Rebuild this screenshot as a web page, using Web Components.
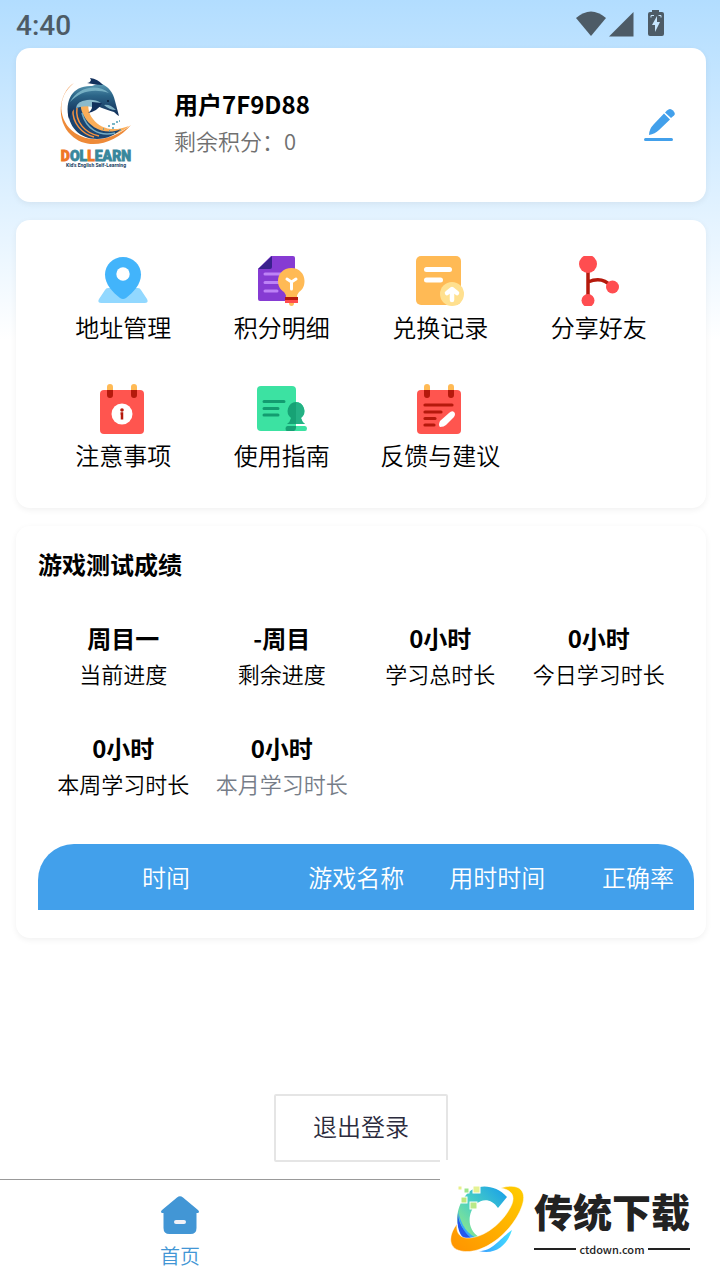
<!DOCTYPE html>
<html lang="zh-CN">
<head>
<meta charset="utf-8">
<meta name="viewport" content="width=device-width, initial-scale=1">
<title>个人中心</title>
<style>
  html {
    --primary: #42a0eb;
    --tab-active: #4296d5;
    --muted: #707070;
  }
  body {
    margin: 0;
    font-family: "Noto Sans CJK SC", sans-serif;
    font-size: 24px;
    font-weight: 350;
    line-height: 32px;
    color: #000;
  }
</style>
</head>
<body>
<profile-page></profile-page>

<script>
// Attach a shadow root filled from a template string
function render(el, html) {
  const template = document.createElement('template');
  template.innerHTML = html;
  el.attachShadow({ mode: 'open' });
  el.shadowRoot.appendChild(template.content.cloneNode(true));
}

const icons = {
  address: `
    <path d="M10 32h30q2 0 3 2l6 9q2 4-2 4H3q-4 0-2-4l6-9q1-2 3-2z" fill="#92d8ff"/>
    <path d="M25 1C15 1 7 9 7 18.500c0 10 8 18 15 23.500q3 2 6 0c7-5.500 15-13.500 15-23.500C43 9 35 1 25 1z" fill="#42b4fb"/>
    <circle cx="25" cy="18" r="6.700" fill="#fff"/>`,
  points: `
    <path d="M14 0h22q2 0 2 2v43H3q-2 0-2-2V13z" fill="#863bd3"/>
    <path d="M15 0v11q0 2-2 2H1z" fill="#39218d"/>
    <path d="M8 18h16M8 26.500h14M8 35h12" stroke="#bd82f6" stroke-width="3" stroke-linecap="round"/>
    <path d="M34.500 12C26 12 21 18 21 25c0 6 3 9 6 11q2 2 2 6h11q0-4 2-6c3-2 5.500-5 5.500-11 0-7-5-13-13-13z" fill="#ffba55"/>
    <path d="M30 23l4.500 3 4.500-3M34.500 26v7" fill="none" stroke="#fff" stroke-width="3" stroke-linecap="round"/>
    <path d="M28 41h13v3H28z" fill="#b5190c"/><path d="M28 44h13v3H28z" fill="#ff4d4d"/>
    <path d="M32 47h5q0 3-2.500 3T32 47z" fill="#ffba55"/>`,
  exchange: `
    <rect x="1" y="0" width="45" height="49" rx="5" fill="#ffba55"/>
    <path d="M11.500 13.500h23M11.500 24h14" stroke="#fff" stroke-width="5" stroke-linecap="round"/>
    <circle cx="37" cy="38" r="12" fill="#ffe08f"/>
    <path d="M37 34v10M32 37l5-4 5 4" fill="none" stroke="#fff" stroke-width="4.500" stroke-linecap="round" stroke-linejoin="round"/>`,
  share: `
    <path d="M14 10v34M14 26q14-6 23 4" fill="none" stroke="#b5190c" stroke-width="3.500"/>
    <circle cx="14" cy="8" r="9" fill="#ff4d50"/>
    <circle cx="14" cy="44.500" r="6.500" fill="#ff4d50"/>
    <circle cx="38.500" cy="31" r="6.500" fill="#ff4d50"/>`,
  notice: `
    <rect x="2" y="6" width="44" height="44" rx="4" fill="#ff554f"/>
    <path d="M9 6V3a3 3 0 0 1 6 0v3zM33 6V3a3 3 0 0 1 6 0v3z" fill="#ffba55"/>
    <path d="M9 6h6v5a3 3 0 0 1-6 0zM33 6h6v5a3 3 0 0 1-6 0z" fill="#b5190c"/>
    <circle cx="24" cy="30" r="10.500" fill="#fff"/>
    <circle cx="24" cy="26" r="1.800" fill="#b5190c"/>
    <path d="M22.500 29.500H24v6" fill="none" stroke="#b5190c" stroke-width="2.500"/>`,
  guide: `
    <rect x="0" y="2" width="39" height="45" rx="4" fill="#3ce2a2"/>
    <path d="M7 17.500h20M7 24.500h14M7 31h14" stroke="#139c70" stroke-width="3" stroke-linecap="round"/>
    <path d="M39 18a9 9 0 0 0-5 16q-1 4-4 6h18q-3-2-4-6a9 9 0 0 0-5-16zM30.500 42h17.500q2 0 2 2.500T48 47H30q-2 0-2-2.500t2.500-2.500z" fill="#3ce2a2"/>
    <path d="M39 18a9 9 0 0 0-5 16q-1 4-4 6h9zM39 42h-8.500q-2 0-2 2.500T30 47h7q2-1 2-3z" fill="#17a275"/>
    <path d="M39 18v22h9q-3-2-4-6a9 9 0 0 0-5-16z" fill="#24b184"/>`,
  feedback: `
    <rect x="2" y="6" width="44" height="44" rx="4" fill="#ff554f"/>
    <path d="M9 6V3a3 3 0 0 1 6 0v3zM33 6V3a3 3 0 0 1 6 0v3z" fill="#ffba55"/>
    <path d="M9 6h6v5a3 3 0 0 1-6 0zM33 6h6v5a3 3 0 0 1-6 0z" fill="#b5190c"/>
    <path d="M10 21h27M10 28h16M10 34.500h10M10 41h9" stroke="#b5190c" stroke-width="3.200" stroke-linecap="round"/>
    <path d="M25 37l9-8q3-3 5-1t0 5l-8 8q-2 2-6 2-2-2 0-6z" fill="#fff"/>`
};

class StatusBar extends HTMLElement {
  constructor() {
    super();
    render(this, `
      <style>
        :host {
          box-sizing: border-box;
          display: flex;
          align-items: center;
          justify-content: space-between;
          height: 48px;
          padding: 4px 56px 0 16px;
          color: #4d5b66;
          font: 500 28px/44px Roboto, sans-serif;
        }
        svg { display: block; }
      </style>
      <time><slot></slot></time>
      <svg width="92" height="32" viewBox="0 2 92 32" fill="currentColor" aria-hidden="true">
        <path d="M4 10Q19-3 34 10L19 28z"/>
        <path d="M37 28.500L61.500 4v24.500z"/>
        <path d="M80 2h7v2h3q2 0 2 2v20q0 2-2 2H78q-2 0-2-2V6q0-2 2-2h2z"/>
        <path d="M85 8l-5 9h3v7l5-10h-3z" fill="#c6e5fd"/>
        <path d="M79 9.500v-2h3M86.500 7.500H89v2" stroke="#c6e5fd" fill="none"/>
      </svg>
    `);
  }
}

class PageCard extends HTMLElement {
  constructor() {
    super();
    render(this, `
      <style>
        :host {
          display: block;
          background: #fff;
          border-radius: 14px;
          box-shadow: 0 2px 6px rgba(0, 0, 0, 0.06);
        }
      </style>
      <slot></slot>
    `);
  }
}

class BrandLogo extends HTMLElement {
  constructor() {
    super();
    render(this, `
      <style>
        :host { display: block; }
        svg { display: block; }
        .name { font: 900 14px Roboto, sans-serif; stroke-width: 0.8px; }
        .sub { font: bold 5px Roboto, sans-serif; }
      </style>
      <svg width="100" height="100" viewBox="0 0 100 100">
        <defs>
          <linearGradient id="body" x1="0" y1="0" x2="0" y2="1">
            <stop offset="0" stop-color="#5d9db6"/>
            <stop offset=".35" stop-color="#2b6588"/>
            <stop offset="1" stop-color="#0d2450"/>
          </linearGradient>
        </defs>
        <path d="M28 8C10 22 12 46 29 58c18 12 40 5 56-8C70 68 42 77 25 60 10 46 12 18 28 8z" fill="#ee8a38"/>
        <path d="M31 31c-2 16 8 29 26 30 10 0 19-4 26-10-15 6-29 3-36-7-5-6-6-14-3-20z" fill="#fbae59"/>
        <path d="M22 32c-1 20 12 32 29 32 9 0 19-4 24-10-15 7-31-1-37-13-2-4-4-8-3-14z" fill="#1b4571"/>
        <path d="M31 33c-2 14 8 25 22 28M27 34c-1 14 9 25 21 28" fill="none" stroke="#f5913f" stroke-width="1.500"/>
        <path d="M36 38c4 15 16 24 33 20" fill="none" stroke="#75acc2" stroke-width="1.500"/>
        <path d="M23 44C18 25 27 10 46 11l8-3c9 4 13 9 15 18l4 15q-2-1-5-4c-5-1-8-3-12-4-9-4-16-3-22-2-5 1-8 4-11 13z" fill="url(#body)"/>
        <path d="M41 8q3 0 4-3l-1-2q8 1 13 7-7 0-16-2z" fill="#12305c"/>
        <path d="M24 27c8-15 27-19 39-9-15-5-29-2-39 9z" fill="#75afc3"/>
        <path d="M41 25q-10 1-11 8 9-3 16-1 3-3 9-4-6-4-14-3z" fill="#8bbacc"/>
        <path d="M46 27l10 1q-4 8-14 10 4-3 4-6z" fill="#12305c"/>
        <path d="M58 30q6-1 12 5-7 0-12-5z" fill="#7fb2c6"/>
        <circle cx="62" cy="26" r="1" fill="#081b38"/>
        <path d="M57 54h1M62 51h2M66 49h3M70 47h2M66 53h2M73 46h1M63 56h1M74 55h1" stroke="#4e9fb5" stroke-width="1.500"/>
        <text class="name" x="50" y="86" text-anchor="middle" fill="#38879c" stroke="#38879c"><tspan fill="#ef7623" stroke="#ef7623">D</tspan>OL<tspan fill="#ef7623" stroke="#ef7623">L</tspan>EARN</text>
        <text class="sub" x="50" y="92" text-anchor="middle" fill="#153b5f">Kid's English Self-Learning</text>
      </svg>
    `);
  }
}

class UserPanel extends HTMLElement {
  constructor() {
    super();
    render(this, `
      <style>
        :host {
          display: flex;
          align-items: center;
          gap: 28px;
          padding: 27px 30px;
        }
        .info {
          flex: 1;
          padding-bottom: 6px;
        }
        h1 {
          margin: 0;
          font-size: 24px;
          font-weight: 700;
          line-height: 36px;
        }
        p {
          margin: 0;
          color: var(--muted);
          font-size: 22px;
          line-height: 36px;
        }
        button {
          padding: 0;
          border: 0;
          background: none;
          color: var(--primary);
          cursor: pointer;
        }
        svg { display: block; }
      </style>
      <brand-logo></brand-logo>
      <div class="info">
        <h1><slot name="name"></slot></h1>
        <p><slot name="points"></slot></p>
      </div>
      <button type="button" aria-label="编辑资料">
        <svg width="32" height="32" viewBox="0 0 32 32" fill="currentColor">
          <path d="M5 26Q5 20 10 15L20 4.500l6 6L15 21q-4 4-10 5z"/>
          <path d="M21 3.500l2-2q3-3 6 0t1 5L27 9z"/>
          <rect x="0" y="29" width="29" height="3" rx="1.500"/>
        </svg>
      </button>
    `);
  }
}

class MenuGrid extends HTMLElement {
  constructor() {
    super();
    render(this, `
      <style>
        :host {
          display: grid;
          grid-template-columns: repeat(4, 1fr);
          row-gap: 40px;
          padding: 36px 28px;
        }
      </style>
      <slot></slot>
    `);
  }
}

class MenuItem extends HTMLElement {
  constructor() {
    super();
    render(this, `
      <style>
        :host { display: block; }
        a {
          display: flex;
          flex-direction: column;
          align-items: center;
          gap: 4px;
          color: inherit;
          line-height: 34px;
          text-decoration: none;
          white-space: nowrap;
        }
        svg { display: block; }
      </style>
      <a href="#${this.getAttribute('icon')}">
        <svg width="50" height="50" viewBox="0 0 50 50" aria-hidden="true">${icons[this.getAttribute('icon')]}</svg>
        <span><slot></slot></span>
      </a>
    `);
  }
}

class ScorePanel extends HTMLElement {
  constructor() {
    super();
    render(this, `
      <style>
        :host {
          display: block;
          padding: 22px 12px 28px 22px;
        }
        h2 {
          margin: 0;
          font-size: 24px;
          font-weight: 700;
          line-height: 32px;
        }
        .stats {
          display: grid;
          grid-template-columns: repeat(4, 1fr);
          row-gap: 40px;
          margin: 41px 16px 43px 6px;
        }
      </style>
      <h2><slot name="title"></slot></h2>
      <div class="stats"><slot></slot></div>
      <slot name="table"></slot>
    `);
  }
}

class StatItem extends HTMLElement {
  constructor() {
    super();
    render(this, `
      <style>
        :host {
          display: block;
          text-align: center;
          white-space: nowrap;
        }
        .value {
          font-weight: 700;
          line-height: 34px;
        }
        .label {
          font-size: 22px;
          line-height: 36px;
        }
        :host([dim]) .label { color: #767d88; }
      </style>
      <div class="value">${this.getAttribute('value')}</div>
      <div class="label"><slot></slot></div>
    `);
  }
}

class RecordTable extends HTMLElement {
  constructor() {
    super();
    render(this, `
      <style>
        :host { display: block; }
        table {
          width: 100%;
          table-layout: fixed;
          border-collapse: collapse;
          border-radius: 36px 36px 0 0;
          overflow: hidden;
          background: var(--primary);
          color: #fff;
        }
        th {
          height: 66px;
          padding: 0;
          font-weight: inherit;
          white-space: nowrap;
        }
        th:nth-child(1) { width: 39%; }
        th:nth-child(2) { width: 19%; }
        th:nth-child(3) { width: 24%; }
        th:last-child {
          padding-right: 20px;
          text-align: right;
        }
      </style>
      <table>
        <thead>
          <tr>
            <th scope="col">时间</th>
            <th scope="col">游戏名称</th>
            <th scope="col">用时时间</th>
            <th scope="col">正确率</th>
          </tr>
        </thead>
      </table>
    `);
  }
}

class LogoutButton extends HTMLElement {
  constructor() {
    super();
    render(this, `
      <style>
        :host { display: block; }
        button {
          padding: 14px 37px 18px;
          border: 2px solid #e5e5e5;
          border-radius: 2px;
          background: #fff;
          color: #2b2b3d;
          font: inherit;
          cursor: pointer;
        }
      </style>
      <button type="button"><slot></slot></button>
    `);
  }
}

class TabBar extends HTMLElement {
  constructor() {
    super();
    render(this, `
      <style>
        :host {
          display: grid;
          grid-template-columns: 1fr 1fr;
          padding: 16px 0 10px;
          border-top: 1px solid #999;
          background: #fff;
        }
        a {
          display: flex;
          flex-direction: column;
          align-items: center;
          gap: 8px;
          color: var(--tab-active);
          font-size: 20px;
          line-height: 28px;
          text-decoration: none;
        }
        svg { display: block; }
      </style>
      <a href="#home" aria-current="page">
        <svg width="38" height="38" viewBox="0 0 38 38" fill="currentColor" aria-hidden="true">
          <path d="M16 1.500q3-2.500 6 0L37 14q2 2 0 3h-1.500v15q0 6-6 6h-21q-6 0-6-6V17H1q-2-1 0-3z"/>
          <rect x="13" y="24" width="12" height="4" rx="2" fill="#f1f1f8"/>
        </svg>
        <slot></slot>
      </a>
    `);
  }
}

// Site badge that floats over the lower right corner
class SiteBadge extends HTMLElement {
  constructor() {
    super();
    render(this, `
      <style>
        :host {
          position: absolute;
          right: 0;
          bottom: 0;
          box-sizing: border-box;
          display: flex;
          gap: 10px;
          width: 280px;
          height: 120px;
          padding: 24px 30px 0 10px;
          background: #fff;
          color: #222;
        }
        svg { display: block; }
        .text { flex: 1; }
        .name {
          font-size: 39px;
          font-weight: 900;
          line-height: 52px;
          white-space: nowrap;
        }
        .site {
          display: flex;
          align-items: center;
          gap: 3px;
          font-size: 11px;
          font-weight: 500;
          line-height: 26px;
        }
        .site::before, .site::after {
          content: "";
          flex: 1;
          height: 2px;
          background: #222;
        }
      </style>
      <svg width="74" height="72" viewBox="0 0 74 72" aria-hidden="true">
        <defs>
          <linearGradient id="ring" x1="1" y1="0" x2="0" y2="1">
            <stop offset="0" stop-color="#ffcd00"/>
            <stop offset="1" stop-color="#ff9200"/>
          </linearGradient>
          <linearGradient id="arc" x1="1" y1="0" x2="0" y2="1">
            <stop offset="0" stop-color="#159ced"/>
            <stop offset=".5" stop-color="#49cfc3"/>
            <stop offset="1" stop-color="#a1ef7c"/>
          </linearGradient>
          <linearGradient id="tail">
            <stop offset="0" stop-color="#369aff"/>
            <stop offset="1" stop-color="#43dfff"/>
          </linearGradient>
        </defs>
        <path d="M57 13C45 0 26-1 16 11 3 27 5 48 19 57l10-4C16 45 18 28 26 20c7-6 16-5 22 4z" fill="url(#arc)"/>
        <path d="M8 29q1 19 20 26l-10 3Q5 50 8 29z" fill="#2457ed"/>
        <path d="M8 26q4 23 21 29l-4 2Q9 47 8 26z" fill="#38a8fa"/>
        <path d="M62 46C57 62 45 71 29 67c14 0 21-13 33-21z" fill="url(#tail)"/>
        <path d="M51 4c16-5 27 1 21 18-8 24-38 50-61 45-14-3-12-17-4-27-1 8 2 13 9 14 20 1 40-19 46-34 3-8 0-14-11-16z" fill="url(#ring)" stroke="#fff" stroke-width=".5"/>
        <g stroke="#fff">
          <rect x="23" y="2" width="7" height="7" fill="#e5f293"/>
          <rect x="20" y="18" width="7" height="7" fill="#b9e989"/>
          <rect x="11" y="13" width="6" height="6" fill="#bce87d"/>
          <rect x="14" y="4" width="5" height="5" fill="#9de68a"/>
          <rect x="8" y="2" width="4" height="4" fill="#e7ef8a"/>
        </g>
      </svg>
      <div class="text">
        <div class="name">传统下载</div>
        <div class="site">ctdown.com</div>
      </div>
    `);
  }
}

class ProfilePage extends HTMLElement {
  constructor() {
    super();
    render(this, `
      <style>
        :host {
          position: relative;
          display: flex;
          flex-direction: column;
          min-height: 100vh;
          background: linear-gradient(#b2ddff, #fff 340px);
        }
        main {
          flex: 1;
          display: flex;
          flex-direction: column;
          gap: 18px;
          padding: 0 14px 17px 16px;
        }
        logout-button {
          align-self: center;
          margin-top: auto;
        }
      </style>
      <status-bar>4:40</status-bar>
      <main>
        <page-card>
          <user-panel>
            <span slot="name">用户7F9D88</span>
            <span slot="points">剩余积分：0</span>
          </user-panel>
        </page-card>
        <page-card>
          <menu-grid>
            <menu-item icon="address">地址管理</menu-item>
            <menu-item icon="points">积分明细</menu-item>
            <menu-item icon="exchange">兑换记录</menu-item>
            <menu-item icon="share">分享好友</menu-item>
            <menu-item icon="notice">注意事项</menu-item>
            <menu-item icon="guide">使用指南</menu-item>
            <menu-item icon="feedback">反馈与建议</menu-item>
          </menu-grid>
        </page-card>
        <page-card>
          <score-panel>
            <span slot="title">游戏测试成绩</span>
            <stat-item value="周目一">当前进度</stat-item>
            <stat-item value="-周目">剩余进度</stat-item>
            <stat-item value="0小时">学习总时长</stat-item>
            <stat-item value="0小时">今日学习时长</stat-item>
            <stat-item value="0小时">本周学习时长</stat-item>
            <stat-item value="0小时" dim>本月学习时长</stat-item>
            <record-table slot="table"></record-table>
          </score-panel>
        </page-card>
        <logout-button>退出登录</logout-button>
      </main>
      <tab-bar>首页</tab-bar>
      <site-badge></site-badge>
    `);
  }
}

customElements.define('status-bar', StatusBar);
customElements.define('page-card', PageCard);
customElements.define('brand-logo', BrandLogo);
customElements.define('user-panel', UserPanel);
customElements.define('menu-grid', MenuGrid);
customElements.define('menu-item', MenuItem);
customElements.define('score-panel', ScorePanel);
customElements.define('stat-item', StatItem);
customElements.define('record-table', RecordTable);
customElements.define('logout-button', LogoutButton);
customElements.define('tab-bar', TabBar);
customElements.define('site-badge', SiteBadge);
customElements.define('profile-page', ProfilePage);
</script>
</body>
</html>
